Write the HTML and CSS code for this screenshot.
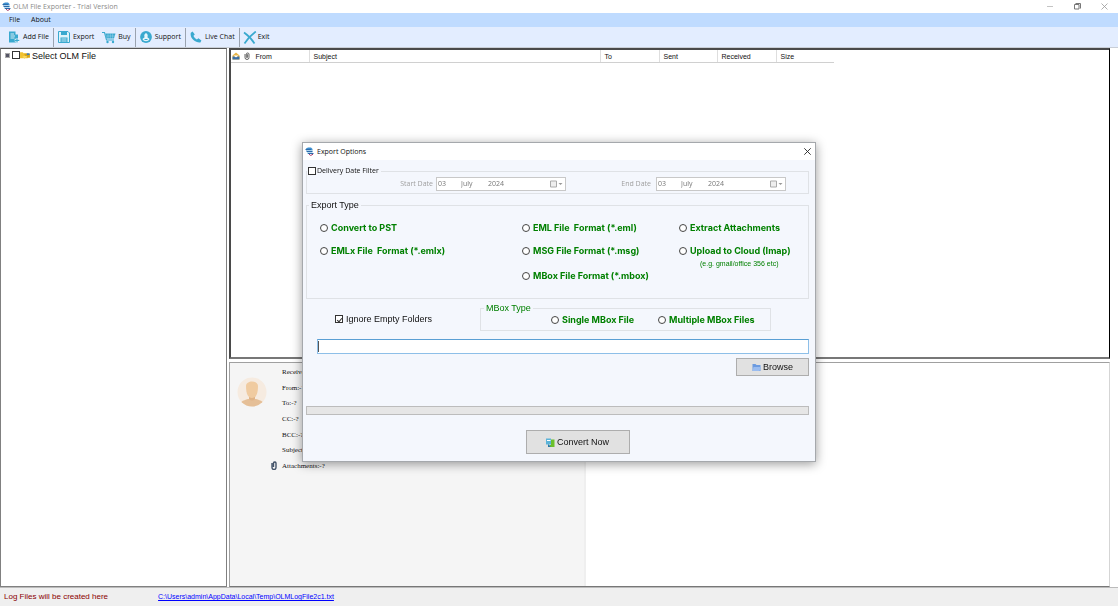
FILE: index.html
```html
<!DOCTYPE html>
<html lang="en">
<head>
<meta charset="utf-8">
<title>OLM File Exporter - Trial Version</title>
<link rel="stylesheet" href="styles.css">
</head>
<body>
<svg class="sprite" aria-hidden="true">
  <symbol id="app" viewBox="0 0 9 9">
    <path d="M1 1.500 3 .5h3L7.500 2v1.500H1z" fill="#3d8fd0"/>
    <path d="M2 3.500h5.500v3.500H2z" fill="#bcdcf0"/>
    <path d="M.5 2.500h5.500M1.500 4.500h6M3 6.500h5.500" stroke="#2b6cab" stroke-width="1"/>
    <path d="m4 7.200 1.700 1.300L8 7.200" fill="none" stroke="#a33a6b" stroke-width="1"/>
  </symbol>
</svg>
<header class="titlebar">
  <svg class="i9"><use href="#app"/></svg>
  <span class="titlebar-text">OLM File Exporter - Trial Version</span>
  <button class="win" aria-label="Minimize"><svg class="i7" viewBox="0 0 7 7"><path d="M0 3.500h6" stroke="#c4c4c4"/></svg></button>
  <button class="win" aria-label="Restore"><svg class="i7" viewBox="0 0 7 7" fill="none" stroke="#777"><path d="M.5 1.500h4.500v4.500H.5zM1.500.5h5v5"/></svg></button>
  <button class="win" aria-label="Close"><svg class="i7" viewBox="0 0 7 7"><path d="m.5.500 6 6m0-6-6 6" stroke="#999" stroke-width=".8"/></svg></button>
</header>
<nav class="menubar">
  <button>File</button>
  <button>About</button>
</nav>
<div class="toolbar">
  <button><svg class="i12" viewBox="0 0 12 12"><path d="M1 .5h6.500v3H10V8H8v3.500H1z" fill="#3aa9cf"/><path d="M2.500 3h3.500M2.500 5h4.500M2.500 7h4" stroke="#fff" stroke-width=".8"/><path d="M9 7v4.500M6.700 9.300h4.600" stroke="#fff" stroke-width="2.400"/><path d="M9 7v4.500M6.700 9.300h4.600" stroke="#3aa9cf" stroke-width="1.200"/></svg>Add File</button>
  <button class="sep"><svg class="i12" viewBox="0 0 12 12"><path d="M.5.500H10L11.500 2v9.500H.5z" fill="#dff3fa" stroke="#3aa9cf"/><path d="M3 .5h6v3.500H3zM2.500 6.500h7v5h-7z" fill="#3aa9cf"/><path d="M3.500 8h5m-5 2h5" stroke="#fff" stroke-width=".7"/></svg>Export</button>
  <button class="buy"><svg class="i14" viewBox="0 0 14 12"><path d="M0 1h2.500l2 7.500H12" fill="none" stroke="#3aa9cf" stroke-width="1.100"/><path d="M3.300 2H13.500l-1.500 5H4.500z" fill="#3aa9cf"/><path d="M6 2v5M8.300 2v5M10.600 2v5M3.500 4.500H13" stroke="#e3edff" stroke-width=".3"/><circle cx="5.500" cy="10.500" r="1.200" fill="#3aa9cf"/><circle cx="11" cy="10.500" r="1.200" fill="#3aa9cf"/></svg>Buy</button>
  <button class="sep"><svg class="i12" viewBox="0 0 12 12"><circle cx="6" cy="6" r="5.900" fill="#3aa9cf"/><path d="M6 2c2 1.300 2 2.500 1.400 4.300L9.600 8c-.8 1.600-2 2.200-3.600 2.200S3.200 9.600 2.400 8l2.200-1.700C4 4.500 4 3.300 6 2z" fill="#e6f5fb"/><path d="M4.500 8.500h3" stroke="#3aa9cf"/></svg>Support</button>
  <button class="sep"><svg class="i12" viewBox="0 0 12 12"><path d="M.8 1.800 2.600.4l2.200 3-1.300 1.400c.5 1.600 1.700 2.800 3.400 3.600l1.500-1.200 3 2.200-1 2C5.500 12-.5 7.500.8 1.800z" fill="#3aa9cf"/></svg>Live Chat</button>
  <button class="sep exit"><svg class="i14" viewBox="0 0 14 13"><path d="M1 1.500c3 2 8 7 10.500 11M12.800.5C8 4 4 8.500 1.500 12.500" fill="none" stroke="#3aa9cf" stroke-width="1.700"/></svg>Exit</button>
</div>
<main class="work">
  <section class="tree">
    <button class="expander" aria-label="Expand"></button>
    <input type="checkbox" id="root" class="tick">
    <svg class="i12" viewBox="0 0 12 10"><path d="M.5 1.500h3l1 1H9V8H.5z" fill="#f2c230"/><path d="M5 3h6.500v4.500H7z" fill="#d9a514"/><path d="M8 2.500h3v2H8z" fill="#3f7db8"/><path d="m3 6 3 3V7.500h2V5.500H5z" fill="#f8d860"/></svg>
    <label for="root">Select OLM File</label>
  </section>
  <section class="right">
    <div class="list">
      <table>
        <thead><tr>
          <th class="c-ico"><svg class="i8" viewBox="0 0 8 8"><path d="M.5 3.500 4 .5l3.500 3v4h-7z" fill="#e7b445"/><path d="M.5 4.500h7v3h-7z" fill="#3a6fa5"/><path d="M1.500 3.500h5L4 5.500z" fill="#fff"/></svg></th>
          <th class="c-ico"><svg class="i8" viewBox="0 0 8 8" fill="none" stroke="#555" stroke-width=".9"><path d="M2 2v3.500a2 2 0 0 0 4 0V2a1.400 1.400 0 0 0-2.700 0v3.300a.7.7 0 0 0 1.300 0V2.200"/></svg></th>
          <th class="c-mid">From</th><th>Subject</th><th class="c-wide">To</th><th class="c-mid">Sent</th><th class="c-wide">Received</th><th class="c-mid">Size</th>
        </tr></thead>
      </table>
    </div>
    <div class="preview">
      <div class="meta">
        <svg class="avatar" viewBox="0 0 30 30"><defs><clipPath id="round"><circle cx="15" cy="15" r="14.500"/></clipPath></defs><circle cx="15" cy="15" r="14.500" fill="#f6ebe0"/><g clip-path="url(#round)"><path d="M2 30c0-5 4-6.500 9-8h8c5 1.500 9 3 9 8z" fill="#e5bf97"/><path d="M12 17h6v5q-3 3-6 0z" fill="#e0b487"/><path d="M9 9c0-6 12-6 12 0 0 8-2 12-6 12S9 17 9 9z" fill="#f0cba0"/></g></svg>
        <dl>
          <dt>Received:-?</dt><dt>From:-?</dt><dt>To:-?</dt><dt>CC:-?</dt><dt>BCC:-?</dt><dt>Subject:-?</dt>
          <dt class="attach"><svg class="clip" viewBox="0 0 6 9"><path d="M1 2v4.500a2 2 0 0 0 4 0V2a1.300 1.300 0 0 0-2.500 0v4" fill="none" stroke="#44546a" stroke-width="1.400"/></svg>Attachments:-?</dt>
        </dl>
      </div>
      <div class="body"></div>
    </div>
  </section>
</main>
<footer class="status">
  <span>Log Files will be created here</span>
  <a href="#log">C:\Users\admin\AppData\Local\Temp\OLMLogFile2c1.txt</a>
</footer>

<div class="overlay">
  <form class="dialog" role="dialog" aria-labelledby="dlg-title">
    <div class="dialog-title">
      <svg class="i9"><use href="#app"/></svg>
      <span id="dlg-title">Export Options</span>
      <button type="button" class="win" aria-label="Close dialog"><svg class="i7" viewBox="0 0 7 7"><path d="m.3.300 6.400 6.400m0-6.400L.3 6.700" stroke="#222" stroke-width=".9"/></svg></button>
    </div>
    <div class="dialog-body">
      <fieldset class="dates">
        <legend><label><input type="checkbox" class="tick">Delivery Date Filter</label></legend>
        <div class="date">
          <label for="sd">Start Date</label>
          <span class="picker"><input id="sd" class="day" value="03" disabled><input class="month" aria-label="Start month" value="July" disabled><input class="year" aria-label="Start year" value="2024" disabled><button type="button" disabled aria-label="Open start calendar"><svg class="cal" viewBox="0 0 13 8"><path d="M.5 1h6v6h-6z" fill="#eee" stroke="#aaa"/><path d="M8.500 3h4l-2 2z" fill="#999"/></svg></button></span>
        </div>
        <div class="date">
          <label for="ed">End Date</label>
          <span class="picker"><input id="ed" class="day" value="03" disabled><input class="month" aria-label="End month" value="July" disabled><input class="year" aria-label="End year" value="2024" disabled><button type="button" disabled aria-label="Open end calendar"><svg class="cal" viewBox="0 0 13 8"><path d="M.5 1h6v6h-6z" fill="#eee" stroke="#aaa"/><path d="M8.500 3h4l-2 2z" fill="#999"/></svg></button></span>
        </div>
      </fieldset>
      <fieldset class="types">
        <legend>Export Type</legend>
        <label class="opt"><input type="radio" name="type">Convert to PST</label>
        <label class="opt"><input type="radio" name="type">EML File&nbsp; Format (*.eml)</label>
        <label class="opt"><input type="radio" name="type">Extract Attachments</label>
        <label class="opt"><input type="radio" name="type">EMLx File&nbsp; Format (*.emlx)</label>
        <label class="opt"><input type="radio" name="type">MSG File Format (*.msg)</label>
        <label class="opt"><input type="radio" name="type">Upload to Cloud (Imap)</label>
        <label class="opt mbox"><input type="radio" name="type">MBox File Format (*.mbox)</label>
        <small>(e.g. gmail/office 356 etc)</small>
      </fieldset>
      <div class="extras">
        <label class="ignore"><input type="checkbox" class="tick" checked>Ignore Empty Folders</label>
        <fieldset class="mtype">
          <legend>MBox Type</legend>
          <label class="opt"><input type="radio" name="mtype">Single MBox File</label>
          <label class="opt"><input type="radio" name="mtype">Multiple MBox Files</label>
        </fieldset>
      </div>
      <div class="path"><span class="caret"></span><input type="text" aria-label="Destination path"></div>
      <button type="button" class="btn browse"><svg class="i9" viewBox="0 0 9 8"><path d="M.5.500h3l1 1h4v6h-8z" fill="#6c9be0"/><path d="M1.500 3.500h7.500l-1.500 4h-7z" fill="#9bbdf0"/></svg>Browse</button>
      <div class="bar" role="progressbar" aria-label="Export progress"></div>
      <button type="button" class="btn convert"><svg class="i9" viewBox="0 0 9 9"><path d="M0 .5h5v6H0z" fill="#5cb3d8"/><path d="M1 2.500h3.500" stroke="#fff"/><path d="M5 1.500h3.500V9H3.500V7H5z" fill="#6bc02c"/><path d="m2 6 3 3H2z" fill="#2878a8"/></svg>Convert Now</button>
    </div>
  </form>
</div>
</body>
</html>
```
FILE: styles.css
```css
* { box-sizing: border-box; }
body {
  margin: 0;
  height: 100vh;
  display: flex;
  flex-direction: column;
  font: 7px/10px "Open Sans", "Noto Sans", sans-serif;
  color: #111;
  background: #fff;
}
button {
  font: inherit;
  color: inherit;
  background: none;
  border: 0;
  padding: 0;
  display: inline-flex;
  align-items: center;
}
input { margin: 0; }
svg { flex: none; display: block; }
.sprite { position: absolute; width: 0; height: 0; }
.i7 { width: 7px; height: 7px; }
.i8 { width: 8px; height: 8px; }
.i9 { width: 9px; height: 9px; }
.i12 { width: 12px; height: 12px; }
.i14 { width: 14px; height: 13px; }

.titlebar {
  height: 13px;
  display: flex;
  align-items: center;
  gap: 20px;
  padding: 0 10px 0 2px;
}
.titlebar-text { flex: 1; margin-left: -18px; color: #8a8a8a; }
.menubar {
  height: 14px;
  display: flex;
  gap: 11px;
  padding-left: 9px;
  background: #bfdbff;
}
.toolbar {
  height: 21px;
  display: flex;
  align-items: center;
  padding-left: 8px;
  background: #e3edff;
  border-bottom: 1px solid #c9ced6;
}
.toolbar button { height: 19px; gap: 3px; padding-right: 4px; }
.toolbar .sep { border-left: 1px solid #9aa3b0; padding-left: 4px; }
.toolbar button:nth-child(2) { padding-right: 8px; }
.toolbar .buy { gap: 2px; }
.toolbar .exit { gap: 1px; padding-left: 3px; }

.work {
  flex: 1;
  min-height: 0;
  display: flex;
  gap: 2px;
  padding-right: 8px;
}
.tree {
  width: 227px;
  flex: none;
  display: flex;
  align-items: flex-start;
  padding: 2px 0 0 4px;
  border: 1px solid #808080;
  border-top-color: #555;
  font: 9px/10px "Liberation Sans", Arial, sans-serif;
}
.tree label { margin-left: 1px; white-space: nowrap; }
.tree svg { height: 9px; margin-left: -1px; }
.expander {
  width: 5px;
  height: 5px;
  margin: 2px 2px 0 0;
  border: 1px solid #aaa;
  background: #556;
}
.tick {
  appearance: none;
  width: 8px;
  height: 8px;
  flex: none;
  display: grid;
  place-items: center;
  border: 1px solid #333;
  background: #fff;
}
.tick:checked::after {
  content: "";
  width: 2px;
  height: 4px;
  border: solid #333;
  border-width: 0 1px 1px 0;
  rotate: 40deg;
}

.right { flex: 1; min-width: 0; display: flex; flex-direction: column; gap: 3px; }
.list { flex: 311; border: 2px solid #4a4a4a; border-right: 1px solid #000; border-bottom-color: #777; }
table { border-collapse: collapse; table-layout: fixed; width: 603px; }
th {
  height: 12px;
  padding: 2px 0 0 4px;
  border-right: 1px solid #dedede;
  border-bottom: 1px solid #d0d0d0;
  font: 7px/9px "Liberation Sans", Arial, sans-serif;
  text-align: left;
}
th:last-child { border-right: 0; }
.c-ico { width: 10px; padding: 1px 0 0 1px; border-right-color: #fff; }
.c-mid { width: 58px; }
.c-wide { width: 59px; }
.preview { flex: 226; display: flex; border: 1px solid #a0a0a0; border-bottom-color: #777; border-right-color: #d5d5d5; }
.meta { width: 356px; display: flex; align-items: flex-start; padding: 2px 0 0 7px; background: #f5f5f5; border-right: 2px solid #efefef; }
.avatar { width: 30px; height: 30px; margin-top: 12px; }
.meta dl {
  height: 108px;
  margin: 0 0 0 15px;
  display: flex;
  flex-direction: column;
  justify-content: space-between;
  font: 7px/14px "Liberation Serif", "Times New Roman", serif;
}
.attach { display: flex; align-items: center; gap: 5px; margin-left: -11px; }
.clip { width: 6px; height: 9px; }

.status {
  height: 19px;
  display: flex;
  align-items: center;
  gap: 50px;
  padding-left: 4px;
  background: #efefef;
  border-top: 1px solid #bbb;
  font: 8px/10px "Liberation Sans", Arial, sans-serif;
  color: #8b0000;
}
.status a { color: #00f; font-size: 7px; }

.overlay { position: fixed; inset: 0; display: grid; place-items: center; padding-bottom: 2px; }
.dialog {
  width: min(514px, 96vw);
  border: 1px solid #a5a8ac;
  background: #f4f7fd;
  box-shadow: 0 2px 10px rgba(0, 0, 0, .4);
  font: 8px/10px "Liberation Sans", Arial, sans-serif;
}
.dialog-title {
  height: 17px;
  display: flex;
  align-items: center;
  gap: 3px;
  padding: 0 4px 0 2px;
  background: #fff;
  font: 7px/10px "Open Sans", "Noto Sans", sans-serif;
}
.dialog-title span { flex: 1; }
.dialog-body { display: flex; flex-direction: column; padding: 6px 6px 7px 3px; }
fieldset { margin: 0; min-width: 0; padding: 0; border: 1px solid #dfe2e6; }
legend { padding: 0 2px; margin-left: 2px; line-height: 10px; }
legend label { display: flex; align-items: center; gap: 1px; }
.dates {
  display: grid;
  grid-template-columns: 259px 1fr;
  padding: 1px 0 2px;
  font: 7px/10px "Open Sans", "Noto Sans", sans-serif;
}
.dates legend { margin-left: 0; padding-left: 1px; }
.dates .date { display: flex; align-items: center; justify-content: flex-end; gap: 3px; color: #a0a0a0; }
.dates .date:last-child { padding-right: 22px; gap: 5px; }
.picker {
  width: 130px;
  height: 14px;
  display: flex;
  align-items: center;
  padding: 0 2px 0 1px;
  border: 1px solid #c8c8c8;
  background: #fff;
}
.picker input {
  width: 23px;
  padding: 0;
  border: 0;
  background: none;
  font: inherit;
  color: #777;
}
.picker .month { width: 27px; }
.picker button { margin-left: auto; }
.cal { width: 13px; height: 8px; }
.types {
  margin-top: 6px;
  display: grid;
  grid-template-columns: 202px 157px 1fr;
  grid-template-rows: 23px 23px 28px;
  padding: 6px 0 8px 13px;
}
.types legend { font-size: 9px; margin-left: -11px; }
.opt {
  display: flex;
  align-items: center;
  gap: 3px;
  font: bold 9px/12px Inter, "Liberation Sans", sans-serif;
  color: #008000;
  white-space: nowrap;
}
.opt input {
  appearance: none;
  width: 8px;
  height: 8px;
  flex: none;
  border: 1px solid #444;
  border-radius: 50%;
  background: #fff;
}
.mbox { grid-column: 2; }
.types small { padding-left: 21px; margin-top: -3px; font-size: 7px; color: #008000; }
.extras { display: flex; align-items: center; justify-content: space-between; margin-top: 4px; padding: 0 38px 0 29px; }
.ignore { display: flex; align-items: center; gap: 3px; padding-top: 4px; font-size: 9px; }
.mtype { width: 291px; height: 28px; display: flex; gap: 24px; padding: 1px 0 0 70px; }
.mtype legend { margin-left: -67px; font-size: 9px; color: #008000; }
.mtype .opt { height: 12px; }
.path {
  height: 15px;
  margin: 8px 0 0 11px;
  display: flex;
  align-items: center;
  border: 1px solid #8dbfe8;
  border-top-color: #5a9fd4;
  background: #fff;
}
.path input { flex: 1; height: 11px; padding: 0; border: 0; outline: 0; background: none; font: inherit; }
.caret { width: 1px; height: 11px; background: #555; }
.btn {
  justify-content: center;
  gap: 2px;
  border: 1px solid #adadad;
  background: #e1e1e1;
  font-size: 9px;
}
.browse { align-self: flex-end; width: 73px; height: 18px; margin-top: 4px; }
.bar { height: 9px; margin-top: 30px; border: 1px solid #bcbcbc; background: #e6e6e6; }
.convert { align-self: center; width: 104px; height: 24px; margin: 15px 0 0 40px; }
```
